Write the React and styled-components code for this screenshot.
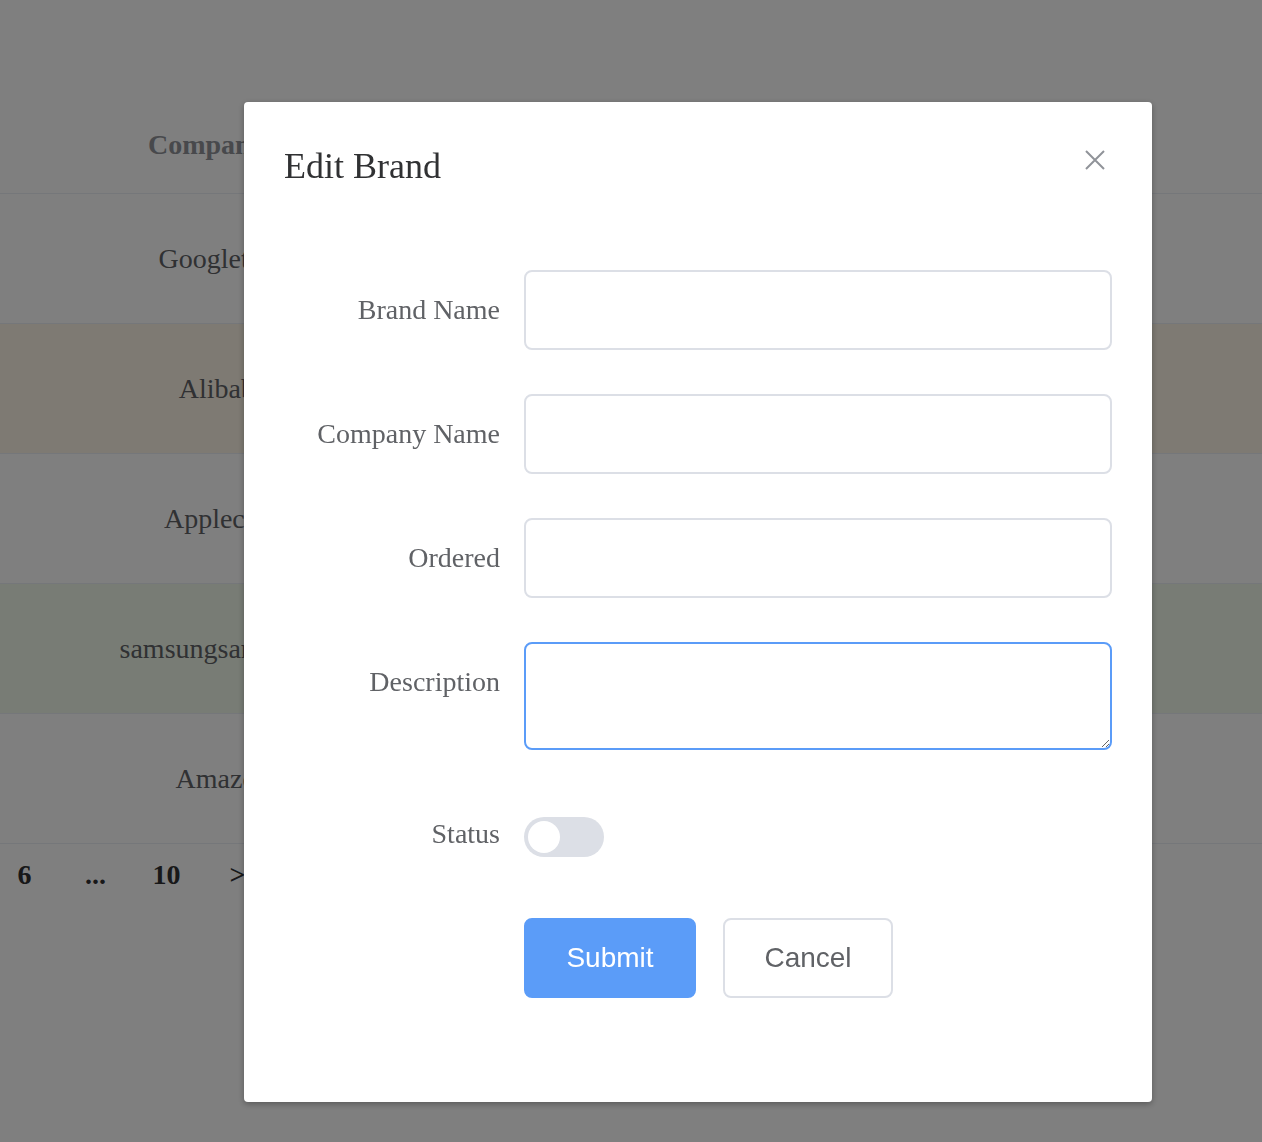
import React, { useState } from 'react';
import styled, { createGlobalStyle } from 'styled-components';

const GlobalStyle = createGlobalStyle`
  html, body {
    margin: 0;
    padding: 0;
    background: #ffffff;
    font-family: "Liberation Serif", "Times New Roman", serif;
  }
  * { box-sizing: border-box; }
`;

const Page = styled.div`
  width: 1262px;
  height: 1142px;
  overflow: hidden;
  padding-top: 97px;
`;

const Row = styled.div`
  display: grid;
  grid-template-columns: 446px 1fr;
  height: ${({ $head }) => ($head ? '97px' : '130px')};
  align-items: center;
  border-bottom: 1px solid #ebeef5;
  background: ${({ $tone }) =>
    $tone === 'warning' ? '#fdf5e6' : $tone === 'success' ? '#f0f9eb' : '#ffffff'};
`;

const Cell = styled.div`
  text-align: center;
  font-size: 28px;
  white-space: nowrap;
  color: ${({ $head }) => ($head ? '#909399' : '#606266')};
  font-weight: ${({ $head }) => ($head ? 'bold' : 'normal')};
`;

const Pager = styled.div`
  display: flex;
  align-items: center;
  height: 62px;
  margin-left: -11px;
`;

const PageItem = styled.span`
  width: 71px;
  text-align: center;
  font-size: 28px;
  font-weight: bold;
  color: #303133;
`;

const Overlay = styled.div`
  position: fixed;
  inset: 0;
  background: rgba(0, 0, 0, 0.5);
  padding: 102px 0 0 244px;
`;

const Dialog = styled.div`
  position: relative;
  width: 908px;
  height: 1000px;
  background: #ffffff;
  border-radius: 4px;
  box-shadow: 0 2px 6px rgba(0, 0, 0, 0.3);
`;

const Header = styled.div`
  padding: 40px 40px 20px;
`;

const Title = styled.h2`
  margin: 0;
  font-size: 36px;
  line-height: 48px;
  font-weight: normal;
  color: #303133;
`;

const CloseButton = styled.button`
  position: absolute;
  top: 42px;
  right: 41px;
  width: 32px;
  height: 32px;
  padding: 0;
  border: none;
  background: transparent;
  cursor: pointer;
  display: flex;
`;

const Body = styled.div`
  padding: 60px 40px;
`;

const FormItem = styled.div`
  display: flex;
  align-items: flex-start;
  margin-bottom: 44px;
`;

const Label = styled.label`
  width: 240px;
  flex-shrink: 0;
  padding-right: 24px;
  text-align: right;
  font-size: 28px;
  line-height: 80px;
  color: #606266;
`;

const Content = styled.div`
  flex: 1;
  display: flex;
  align-items: center;
  min-height: 80px;
  gap: 27px;
`;

const Input = styled.input`
  width: 100%;
  height: 80px;
  border: 2px solid #dcdfe6;
  border-radius: 8px;
  padding: 0 30px;
  font-size: 28px;
  font-family: "Liberation Sans", Arial, sans-serif;
  color: #606266;
  outline: none;
`;

const TextArea = styled.textarea`
  display: block;
  width: 100%;
  height: 108px;
  border: 2px solid ${({ $focused }) => ($focused ? '#5b9cf8' : '#dcdfe6')};
  border-radius: 8px;
  padding: 10px 30px;
  font-size: 28px;
  font-family: "Liberation Sans", Arial, sans-serif;
  color: #606266;
  outline: none;
  resize: vertical;
`;

const Switch = styled.button`
  position: relative;
  width: 80px;
  height: 40px;
  margin-top: 6px;
  border: none;
  padding: 0;
  border-radius: 20px;
  background: ${({ $on }) => ($on ? '#5b9cf8' : '#dcdfe6')};
  cursor: pointer;
`;

const Knob = styled.span`
  position: absolute;
  top: 4px;
  left: ${({ $on }) => ($on ? '44px' : '4px')};
  width: 32px;
  height: 32px;
  border-radius: 50%;
  background: #ffffff;
  transition: left 0.2s;
`;

const Button = styled.button`
  width: ${({ $primary }) => ($primary ? '172px' : '170px')};
  height: 80px;
  border-radius: 8px;
  border: 2px solid ${({ $primary }) => ($primary ? '#5b9cf8' : '#dcdfe6')};
  background: ${({ $primary }) => ($primary ? '#5b9cf8' : '#ffffff')};
  color: ${({ $primary }) => ($primary ? '#ffffff' : '#606266')};
  font-family: "Liberation Sans", Arial, sans-serif;
  font-size: 28px;
  cursor: pointer;
`;

const companies = [
  { name: 'Googletech' },
  { name: 'Alibaba', tone: 'warning' },
  { name: 'Applecorp' },
  { name: 'samsungsamsungs', tone: 'success' },
  { name: 'Amazon' },
];

export default function App() {
  const [status, setStatus] = useState(false);

  return (
    <>
      <GlobalStyle />
      <Page>
        <Row $head>
          <Cell $head>Company Id</Cell>
          <Cell $head />
        </Row>
        {companies.map((c) => (
          <Row key={c.name} $tone={c.tone}>
            <Cell>{c.name}</Cell>
            <Cell />
          </Row>
        ))}
        <Pager>
          <PageItem>6</PageItem>
          <PageItem>...</PageItem>
          <PageItem>10</PageItem>
          <PageItem>&gt;</PageItem>
        </Pager>
      </Page>

      <Overlay>
        <Dialog>
          <Header>
            <Title>Edit Brand</Title>
            <CloseButton aria-label="Close">
              <svg width="32" height="32" viewBox="0 0 32 32">
                <path d="M7 7 L25 25 M25 7 L7 25" stroke="#909399" strokeWidth="2" fill="none" />
              </svg>
            </CloseButton>
          </Header>
          <Body>
            <FormItem>
              <Label>Brand Name</Label>
              <Content><Input /></Content>
            </FormItem>
            <FormItem>
              <Label>Company Name</Label>
              <Content><Input /></Content>
            </FormItem>
            <FormItem>
              <Label>Ordered</Label>
              <Content><Input /></Content>
            </FormItem>
            <FormItem>
              <Label>Description</Label>
              <Content><TextArea $focused /></Content>
            </FormItem>
            <FormItem>
              <Label>Status</Label>
              <Content>
                <Switch $on={status} onClick={() => setStatus(!status)}>
                  <Knob $on={status} />
                </Switch>
              </Content>
            </FormItem>
            <FormItem>
              <Label />
              <Content>
                <Button $primary>Submit</Button>
                <Button>Cancel</Button>
              </Content>
            </FormItem>
          </Body>
        </Dialog>
      </Overlay>
    </>
  );
}
